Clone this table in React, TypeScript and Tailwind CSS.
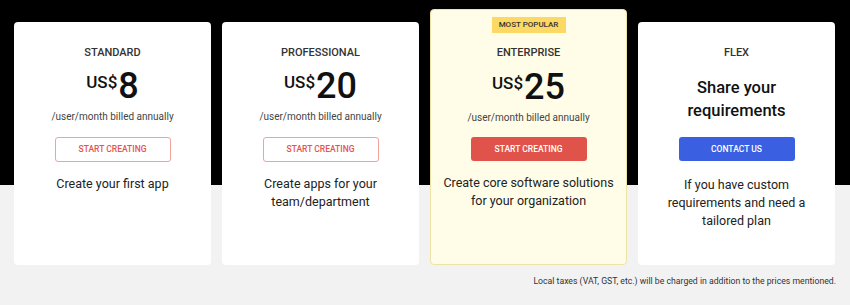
import React from 'react';

const font = { fontFamily: 'Roboto, "Noto Sans", sans-serif' };

const plans = [
  { id: 'standard', name: 'STANDARD', price: '8', desc: ['Create your first app'] },
  { id: 'professional', name: 'PROFESSIONAL', price: '20', desc: ['Create apps for your', 'team/department'] },
];

const Price: React.FC<{ value: string; top?: string }> = ({ value, top = 'mt-[6px]' }) => (
  <div className={`flex items-start text-[#111] ${top}`}>
    <span className="text-[17px] leading-[20px] font-medium mt-[5px] mr-[1px]">US$</span>
    <span className="text-[36px] leading-[38px] font-medium">{value}</span>
  </div>
);

const Desc: React.FC<{ lines: string[]; top?: string }> = ({ lines, top = 'mt-[13px]' }) => (
  <div className={`text-[12.5px] leading-[18px] text-[#222] text-center ${top}`}>
    {lines.map((l) => (
      <div key={l}>{l}</div>
    ))}
  </div>
);

const App: React.FC = () => {
  return (
    <div
      style={font}
      className="w-[850px] h-[305px] overflow-hidden bg-[linear-gradient(to_bottom,#000_185px,#f2f2f3_185px)]"
    >
      <div className="flex items-end gap-[11px] pl-[14px] pt-[9px]">
        {plans.map((p) => (
          <div key={p.id} className="w-[197px] h-[243px] bg-white rounded-[4px] flex flex-col items-center pt-[23px]">
            <div className="text-[11px] leading-[16px] font-medium text-[#333]">{p.name}</div>
            <Price value={p.price} />
            <div className="mt-[5px] text-[10px] leading-[14px] text-[#444]">/user/month billed annually</div>
            <button className="mt-[13px] w-[116px] h-[25px] rounded-[3px] border border-[#f0a39c] text-[#e5544b] text-[8.5px] font-medium">
              START CREATING
            </button>
            <Desc lines={p.desc} />
          </div>
        ))}

        {/* Enterprise */}
        <div className="w-[197px] h-[256px] bg-[#fffde8] border border-[#efe2a6] rounded-[4px] flex flex-col items-center pt-[7px]">
          <div className="bg-[#fcd864] w-[74px] h-[16px] flex items-center justify-center text-[8px] font-medium text-[#333]">
            MOST POPULAR
          </div>
          <div className="mt-[12px] text-[11px] leading-[16px] font-medium text-[#333]">ENTERPRISE</div>
          <Price value="25" top="mt-[7px]" />
          <div className="mt-[5px] text-[10px] leading-[14px] text-[#444]">/user/month billed annually</div>
          <button className="mt-[12px] w-[116px] h-[24px] rounded-[3px] bg-[#e0534a] text-white text-[8.5px] font-medium">
            START CREATING
          </button>
          <Desc lines={['Create core software solutions', 'for your organization']} />
        </div>

        {/* Flex */}
        <div className="w-[197px] h-[243px] bg-white rounded-[4px] flex flex-col items-center pt-[23px]">
          <div className="text-[11px] leading-[16px] font-medium text-[#333]">FLEX</div>
          <div className="mt-[15px] text-[16.5px] leading-[23px] font-medium text-[#111] text-center">
            <div>Share your</div>
            <div>requirements</div>
          </div>
          <button className="mt-[15px] w-[116px] h-[24px] rounded-[3px] bg-[#3a5fe0] text-white text-[8.5px] font-medium">
            CONTACT US
          </button>
          <Desc lines={['If you have custom', 'requirements and need a', 'tailored plan']} top="mt-[15px]" />
        </div>
      </div>

      <div className="pr-[14px] mt-[10px] text-right text-[8.7px] leading-[12px] text-[#333]">
        Local taxes (VAT, GST, etc.) will be charged in addition to the prices mentioned.
      </div>
    </div>
  );
};

export default App;
